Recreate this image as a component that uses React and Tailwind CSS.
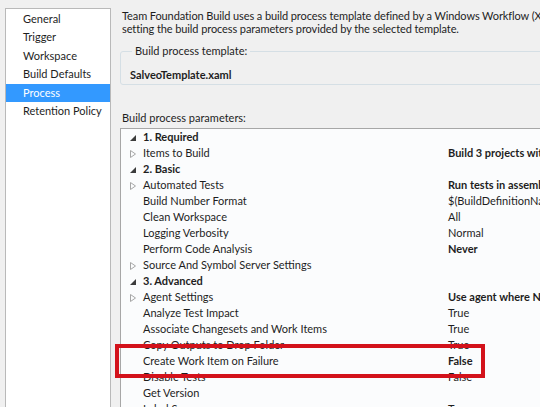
const font = { fontFamily: 'Lato, "Open Sans", sans-serif' };

const pages = ['General', 'Trigger', 'Workspace', 'Build Defaults', 'Process', 'Retention Policy'];

const rows = [
  { kind: 'group', name: '1. Required' },
  { kind: 'item', name: 'Items to Build', value: 'Build 3 projects with', bold: true, arrow: true },
  { kind: 'group', name: '2. Basic' },
  { kind: 'item', name: 'Automated Tests', value: 'Run tests in assembly', bold: true, arrow: true },
  { kind: 'item', name: 'Build Number Format', value: '$(BuildDefinitionName)' },
  { kind: 'item', name: 'Clean Workspace', value: 'All' },
  { kind: 'item', name: 'Logging Verbosity', value: 'Normal' },
  { kind: 'item', name: 'Perform Code Analysis', value: 'Never', bold: true },
  { kind: 'item', name: 'Source And Symbol Server Settings', value: '', arrow: true },
  { kind: 'group', name: '3. Advanced' },
  { kind: 'item', name: 'Agent Settings', value: 'Use agent where Name', bold: true, arrow: true },
  { kind: 'item', name: 'Analyze Test Impact', value: 'True' },
  { kind: 'item', name: 'Associate Changesets and Work Items', value: 'True' },
  { kind: 'item', name: 'Copy Outputs to Drop Folder', value: 'True' },
  { kind: 'item', name: 'Create Work Item on Failure', value: 'False', bold: true },
  { kind: 'item', name: 'Disable Tests', value: 'False' },
  { kind: 'item', name: 'Get Version', value: '' },
  { kind: 'item', name: 'Label Sources', value: 'True' },
];

function Expanded() {
  return (
    <svg width="6" height="6" viewBox="0 0 6 6">
      <path d="M6 0 L6 6 L0 6 Z" fill="#3c3c3c" />
    </svg>
  );
}

function Collapsed() {
  return (
    <svg width="6" height="8" viewBox="0 0 6 8">
      <path d="M0.5 0.5 L5.5 4 L0.5 7.5 Z" fill="none" stroke="#a6a6a6" strokeWidth="1" />
    </svg>
  );
}

function ParamRow({ row }) {
  const group = row.kind === 'group';
  return (
    <div className={`flex h-4 items-center ${group ? 'font-bold' : ''}`}>
      <div className="flex w-[22px] shrink-0 justify-center pl-[1px]">
        {group ? <Expanded /> : row.arrow ? <Collapsed /> : null}
      </div>
      <div className="w-[305px] shrink-0 whitespace-nowrap">{row.name}</div>
      <div className={`whitespace-nowrap ${row.bold ? 'font-bold' : ''}`}>{row.value}</div>
    </div>
  );
}

export default function App() {
  return (
    <div
      style={font}
      className="relative flex h-[407px] w-[540px] overflow-hidden bg-[#f0f0f0] text-[11px] text-[#1e1e1e]"
    >
      <div className="shrink-0 pl-[5px] pt-[8px]">
        <div className="h-[420px] w-[106px] border border-[#b9b9b9] bg-white pt-[0.5px]">
          {pages.map((p) => (
            <div
              key={p}
              className={`flex h-[18.5px] items-center whitespace-nowrap pl-[17px] ${
                p === 'Process' ? 'bg-[#3399ff] text-white' : ''
              }`}
            >
              {p}
            </div>
          ))}
        </div>
      </div>

      <div className="flex min-w-0 flex-1 flex-col pl-[9px]">
        <div className="whitespace-nowrap pl-[2px] pt-[10px] leading-[12.5px] tracking-[-0.1px]">
          <div>Team Foundation Build uses a build process template defined by a Windows Workflow (XAML) file.</div>
          <div>setting the build process parameters provided by the selected template.</div>
        </div>

        <fieldset className="mt-[9px] h-[48px] w-[440px] rounded-[3px] border border-[#d5dfe5] pl-[9px]">
          <legend className="ml-[2px] px-[3px] leading-[14px]">Build process template:</legend>
          <div className="pt-[9px] font-bold">SalveoTemplate.xaml</div>
        </fieldset>

        <div className="pl-[2px] pt-[26px] leading-[14px]">Build process parameters:</div>

        <div className="mt-[3px] w-[440px] flex-1 border-l border-t border-[#a7a7a7] bg-[#fbfcfd] pt-[1px]">
          {rows.map((r) => (
            <ParamRow key={r.name} row={r} />
          ))}
        </div>
      </div>

      <div className="absolute left-[115px] top-[344px] h-[34px] w-[370px] border-4 border-[#d3121b]" />
    </div>
  );
}
